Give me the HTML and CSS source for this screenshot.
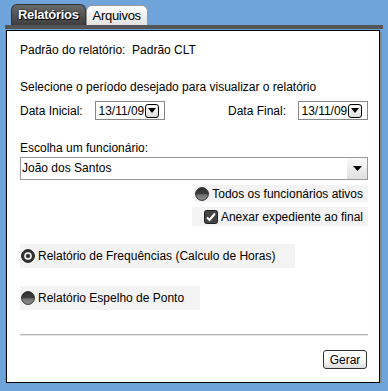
FILE: index.html
```html
<!DOCTYPE html>
<html lang="pt">
<head>
    <meta charset="UTF-8">
    <title>Relatórios</title>
    <link rel="stylesheet" href="styles.css">
</head>
<body>
    <div class="window">
        <div class="tabs">
            <span class="tab active">Relatórios</span>
            <span class="tab">Arquivos</span>
        </div>
        <div class="tab-line"></div>
        <div class="panel">
            <div class="padrao">Padrão do relatório:&nbsp; Padrão CLT</div>
            <div class="selecione">Selecione o período desejado para visualizar o relatório</div>
            <div class="dates">
                <span class="date-label">Data Inicial:</span>
                <span class="date-input">13/11/09<span class="date-btn"><svg width="8" height="5" viewBox="0 0 8 5"><path d="M0 0h8L4 5z" fill="#000"/></svg></span></span>
                <span class="date-label final">Data Final:</span>
                <span class="date-input">13/11/09<span class="date-btn"><svg width="8" height="5" viewBox="0 0 8 5"><path d="M0 0h8L4 5z" fill="#000"/></svg></span></span>
            </div>
            <div class="escolha">Escolha um funcionário:</div>
            <div class="select">
                <span class="select-text">João dos Santos</span>
                <span class="select-btn"><svg width="9" height="5" viewBox="0 0 9 5"><path d="M0 0h9L4.5 5z" fill="#000"/></svg></span>
            </div>
            <div class="opt-row">
                <span class="opt todos">
                    <svg class="radio" width="14" height="14" viewBox="0 0 14 14"><defs><linearGradient id="g1" x1="0" y1="0" x2="0" y2="1"><stop offset="0" stop-color="#2e2e2e"/><stop offset="0.5" stop-color="#3e3e3e"/><stop offset="0.55" stop-color="#6e6e6e"/><stop offset="1" stop-color="#949494"/></linearGradient></defs><circle cx="7" cy="7" r="6.4" fill="url(#g1)" stroke="#2a2a2a" stroke-width="1"/></svg>
                    Todos os funcionários ativos
                </span>
            </div>
            <div class="opt-row">
                <span class="opt anexar">
                    <svg class="check" width="14" height="14" viewBox="0 0 14 14"><rect x="0.5" y="0.5" width="13" height="13" rx="2" fill="#444" stroke="#1e1e1e"/><path d="M3 7.5l2.5 2.5L11 3.5" stroke="#fff" stroke-width="2" fill="none"/></svg>
                    Anexar expediente ao final
                </span>
            </div>
            <div class="report freq">
                <svg class="radio" width="14" height="14" viewBox="0 0 14 14"><circle cx="7" cy="7" r="6.4" fill="#333" stroke="#1e1e1e"/><circle cx="7" cy="7" r="3.8" fill="#fff"/><circle cx="7" cy="7" r="2.3" fill="#3c3c3c"/></svg>
                Relatório de Frequências (Calculo de Horas)
            </div>
            <div class="report espelho">
                <svg class="radio" width="14" height="14" viewBox="0 0 14 14"><defs><linearGradient id="g2" x1="0" y1="0" x2="0" y2="1"><stop offset="0" stop-color="#2e2e2e"/><stop offset="0.5" stop-color="#3e3e3e"/><stop offset="0.55" stop-color="#6e6e6e"/><stop offset="1" stop-color="#949494"/></linearGradient></defs><circle cx="7" cy="7" r="6.4" fill="url(#g2)" stroke="#2a2a2a" stroke-width="1"/></svg>
                Relatório Espelho de Ponto
            </div>
            <div class="divider"></div>
            <div class="actions">
                <button class="gerar">Gerar</button>
            </div>
        </div>
    </div>
</body>
</html>
```

FILE: styles.css
```css
body {
    margin: 0;
    background-color: #6ea4d9;
    font-family: "Liberation Sans", Arial, sans-serif;
    font-size: 12px;
    color: #000;
}
.window {
    margin: 5px 0 0 5px;
    width: 378px;
}
.tabs {
    display: flex;
    height: 20px;
    padding-left: 6px;
    align-items: flex-end;
}
.tab {
    height: 19px;
    line-height: 20px;
    padding: 0 6px;
    border-radius: 6px 6px 0 0;
    border: 1px solid #999;
    border-bottom: none;
    background: linear-gradient(#ffffff, #e2e2e2);
    font-size: 13px;
    letter-spacing: -0.3px;
}
.tab.active {
    height: 20px;
    padding: 0 6px;
    border-color: #333;
    background: linear-gradient(#6a6a6a, #3e3e3e);
    color: #fff;
    font-weight: bold;
    text-shadow: 0 0 2px #000, 1px 1px 0 #000;
}
.tab-line {
    height: 4px;
    background-color: #555;
}
.panel {
    margin: 1px 0 0 1px;
    border: 1px solid #000;
    background-color: #fff;
    box-shadow: 2px 2px 0 #8a8a8a, -1px 0 0 #8a8a8a;
    padding: 0 11px 0 13px;
    width: 348px;
    height: 351px;
}
.padrao {
    margin-top: 12px;
    line-height: 15px;
}
.selecione {
    margin-top: 22px;
    line-height: 15px;
}
.dates {
    margin-top: 6px;
    display: flex;
    align-items: center;
    height: 19px;
}
.date-label {
    width: 76px;
}
.date-label.final {
    margin-left: 63px;
    width: 71px;
}
.date-input {
    display: flex;
    align-items: center;
    height: 17px;
    border: 1px solid #888;
    padding-left: 2px;
    width: 66px;
}
.date-btn {
    display: flex;
    align-items: center;
    justify-content: center;
    width: 12px;
    height: 12px;
    margin-left: 1px;
    border: 1px solid #000;
    border-radius: 3px;
    background: linear-gradient(#fff, #ddd);
}
.escolha {
    margin-top: 21px;
    line-height: 15px;
}
.select {
    margin-top: 1px;
    display: flex;
    height: 21px;
    border: 1px solid #999;
}
.select-text {
    flex: 1;
    line-height: 21px;
    padding-left: 1px;
}
.select-btn {
    width: 20px;
    display: flex;
    align-items: center;
    justify-content: center;
    background: linear-gradient(#fafafa, #e0e0e0);
}
.opt-row {
    display: flex;
    justify-content: flex-end;
    margin-top: 5px;
}
.opt {
    display: flex;
    align-items: center;
    gap: 3px;
    background-color: #f3f3f3;
    padding-right: 5px;
    white-space: nowrap;
}
.todos {
    height: 17px;
    padding-left: 1px;
}
.anexar {
    height: 19px;
    padding-left: 12px;
}
.report {
    display: flex;
    align-items: center;
    gap: 3px;
    height: 24px;
    margin-top: 18px;
    background-color: #f3f3f3;
    padding-left: 1px;
}
.freq {
    width: 274px;
}
.espelho {
    width: 179px;
}
.divider {
    margin-top: 24px;
    height: 1px;
    background-color: #b5b5b5;
    border-bottom: 1px solid #e6e6e6;
}
.actions {
    display: flex;
    justify-content: flex-end;
    margin-top: 14px;
    padding-right: 1px;
}
.gerar {
    width: 44px;
    height: 19px;
    padding: 0;
    border: 1px solid #333;
    border-radius: 3px;
    background: linear-gradient(#ffffff 45%, #dcdcdc);
    font-family: "Liberation Sans", Arial, sans-serif;
    font-size: 12px;
    color: #000;
}
```
